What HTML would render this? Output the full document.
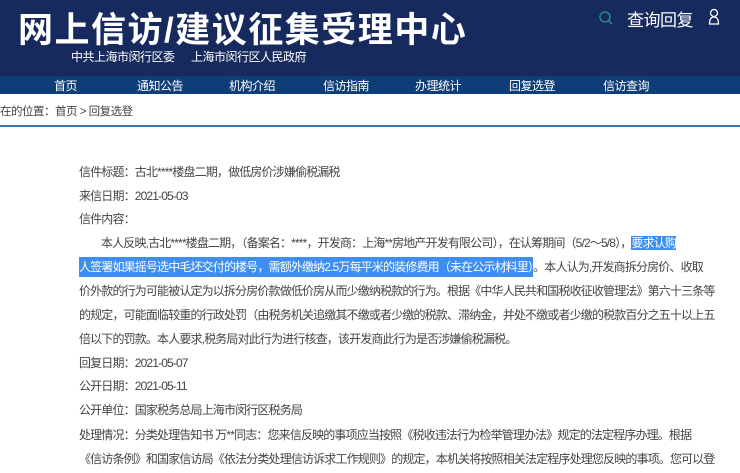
<!DOCTYPE html><html><head><meta charset="utf-8"><style>
body{margin:0;width:740px;height:473px;overflow:hidden;background:#fff;font-family:"Liberation Sans","Noto Sans CJK SC",sans-serif;}
.hd{position:absolute;left:0;top:0;width:740px;height:76px;background:#172a5e;color:#fff}
.t{position:absolute;left:18px;top:2px;font-size:35px;font-weight:bold;letter-spacing:1.5px;white-space:nowrap}
.sub{position:absolute;top:48px;font-size:12px;letter-spacing:-0.5px}
.nav{position:absolute;left:0;top:76px;width:740px;height:18px;background:#0f3d78;color:#fff;font-size:12px}
.nav span{position:absolute;top:1px;letter-spacing:-0.5px}
.bc{position:absolute;left:0;top:103px;font-size:11.5px;color:#444;letter-spacing:-0.5px}
.ln{position:absolute;left:0;top:125px;width:740px;height:2px;background:#3a73b8}
.c{position:absolute;left:79px;font-size:12px;color:#444;white-space:nowrap;letter-spacing:-0.85px}
.hl{background:#3d8ef0;color:#fff}
</style></head><body>
<div class="hd">
<div class="t">网上信访/建议征集受理中心</div>
<div class="sub" style="left:71px">中共上海市闵行区委</div>
<div class="sub" style="left:191px">上海市闵行区人民政府</div>
<svg style="position:absolute;left:598px;top:10px" width="16" height="16"><circle cx="7" cy="7" r="5" fill="none" stroke="#2a9a8a" stroke-width="1.3"/><line x1="10.5" y1="10.5" x2="14" y2="14" stroke="#2a9a8a" stroke-width="1.3"/></svg>
<div style="position:absolute;left:627px;top:6px;font-size:17px;letter-spacing:-0.5px">查询回复</div>
<svg style="position:absolute;left:708px;top:8px" width="12" height="18"><circle cx="6" cy="5" r="3.5" fill="none" stroke="#fff" stroke-width="1.3"/><path d="M1.5 16 Q1.5 9 6 9 Q10.5 9 10.5 16 Z" fill="none" stroke="#fff" stroke-width="1.3"/></svg>
</div>
<div class="nav">
<span style="left:54px">首页</span><span style="left:137px">通知公告</span><span style="left:229px">机构介绍</span><span style="left:323px">信访指南</span><span style="left:415px">办理统计</span><span style="left:509px">回复选登</span><span style="left:603px">信访查询</span>
</div>
<div class="bc">在的位置：首页 &gt; 回复选登</div>
<div class="ln"></div>
<div class="c" style="top:163px">信件标题：古北****楼盘二期，做低房价涉嫌偷税漏税</div>
<div class="c" style="top:187px">来信日期：2021-05-03</div>
<div class="c" style="top:210px">信件内容：</div>
<div class="c" style="top:234px;left:101px">本人反映,古北****楼盘二期，（备案名：****，开发商：上海**房地产开发有限公司），在认筹期间（5/2～5/8），<span class="hl">要求认购</span></div>
<div class="c" style="top:258px"><span class="hl" style="padding:3px 0">人签署如果摇号选中毛坯交付的楼号，需额外缴纳2.5万每平米的装修费用（未在公示材料里）</span>。本人认为,开发商拆分房价、收取</div>
<div class="c" style="top:282px">价外款的行为可能被认定为以拆分房价款做低价房从而少缴纳税款的行为。根据《中华人民共和国税收征收管理法》第六十三条等</div>
<div class="c" style="top:306px">的规定，可能面临较重的行政处罚（由税务机关追缴其不缴或者少缴的税款、滞纳金，并处不缴或者少缴的税款百分之五十以上五</div>
<div class="c" style="top:330px">倍以下的罚款。本人要求,税务局对此行为进行核查，该开发商此行为是否涉嫌偷税漏税。</div>
<div class="c" style="top:354px">回复日期：2021-05-07</div>
<div class="c" style="top:377px">公开日期：2021-05-11</div>
<div class="c" style="top:401px">公开单位：国家税务总局上海市闵行区税务局</div>
<div class="c" style="top:426px">处理情况：分类处理告知书 万**同志：您来信反映的事项应当按照《税收违法行为检举管理办法》规定的法定程序办理。根据</div>
<div class="c" style="top:450px">《信访条例》和国家信访局《依法分类处理信访诉求工作规则》的规定，本机关将按照相关法定程序处理您反映的事项。您可以登</div>
</body></html>
